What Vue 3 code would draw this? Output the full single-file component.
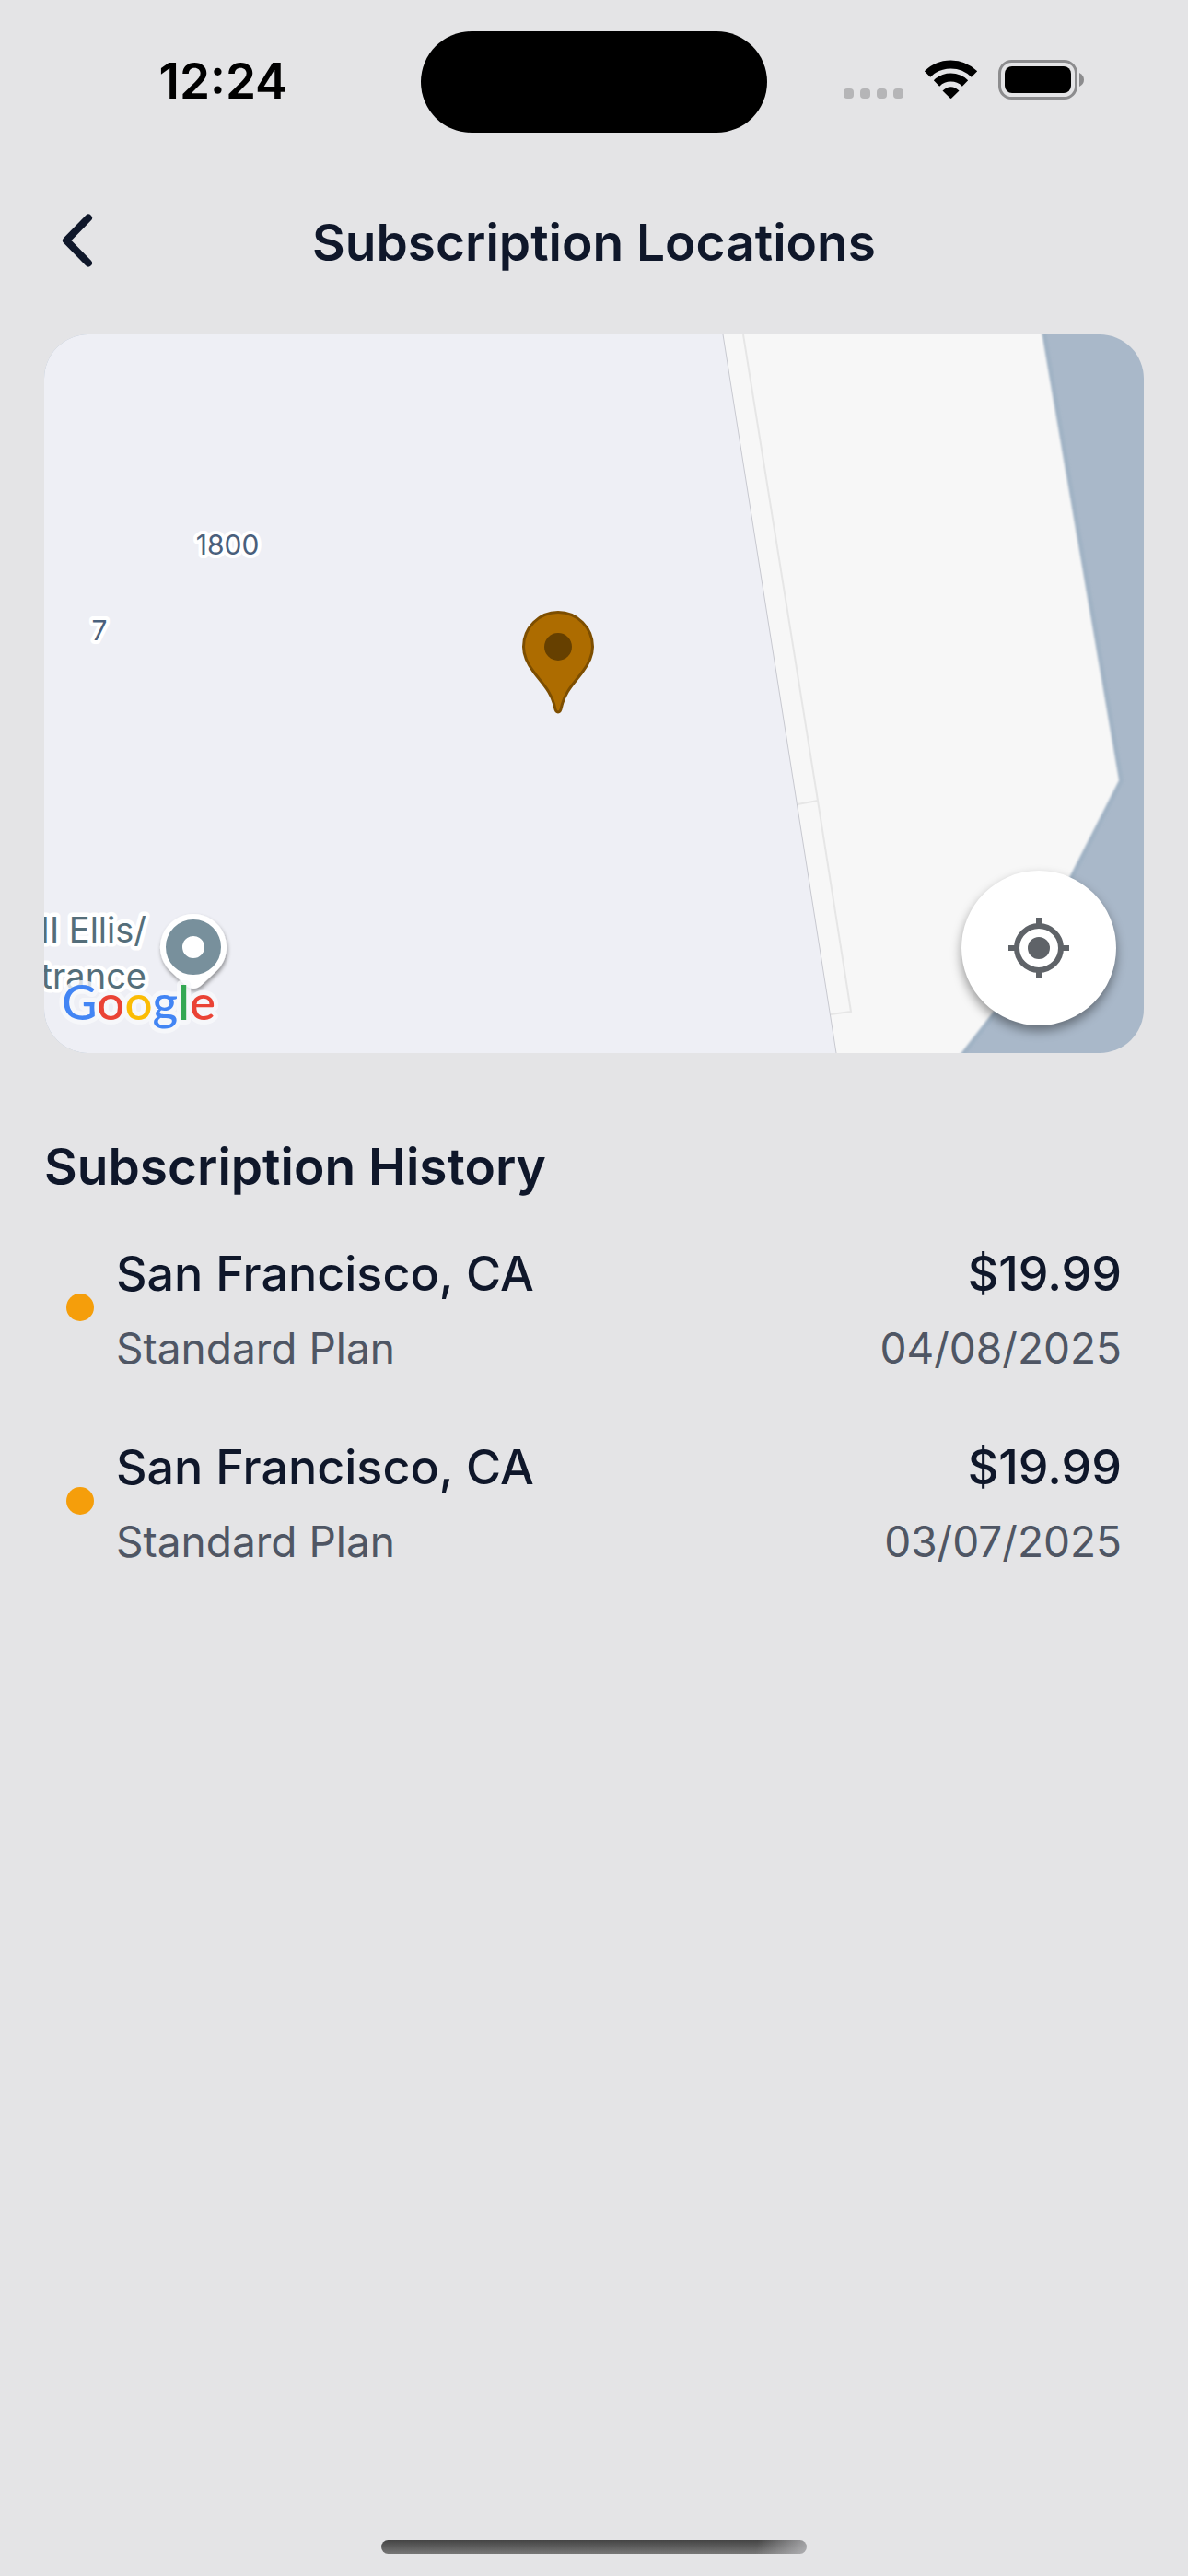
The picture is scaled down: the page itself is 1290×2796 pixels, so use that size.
<script setup>
const history = [
  { id: 1, city: 'San Francisco, CA', plan: 'Standard Plan', price: '$19.99', date: '04/08/2025' },
  { id: 2, city: 'San Francisco, CA', plan: 'Standard Plan', price: '$19.99', date: '03/07/2025' }
]
</script>

<template>
  <div class="screen">
    <div class="status">
      <div class="status-side">
        <time class="clock">12:24</time>
      </div>
      <div class="island"></div>
      <div class="status-side">
        <svg class="status-icons" width="261" height="44" viewBox="0 0 261 44" aria-hidden="true">
          <g fill="#b5b5b7">
            <rect x="0" y="31" width="11" height="11" rx="4" />
            <rect x="18" y="31" width="11" height="11" rx="4" />
            <rect x="36" y="31" width="11" height="11" rx="4" />
            <rect x="54" y="31" width="11" height="11" rx="4" />
          </g>
          <g fill="none" stroke="#000" stroke-width="9">
            <path d="M91 15.5A36 36 0 0 1 142 15.5" />
            <path d="M101 25.5A22 22 0 0 1 132 25.5" />
          </g>
          <path d="M107.500 33.500Q116.500 25 125.500 33.500L117.300 41.600Q116.500 42.400 115.700 41.600Z" />
          <rect x="169.500" y="1.500" width="83" height="40" rx="13" fill="none" stroke="#8c8c8e" stroke-width="3" />
          <rect x="175" y="7" width="72" height="29" rx="8" />
          <path d="M256 14Q261 16.500 261 21.500T256 29Z" fill="#8c8c8e" />
        </svg>
      </div>
    </div>

    <header class="header">
      <button class="back" type="button" aria-label="Back">
        <svg width="34" height="58" viewBox="0 0 34 58" aria-hidden="true">
          <path d="M29 4.500L5 29L29 53.500" fill="none" stroke="#0f172a" stroke-width="8" stroke-linecap="round" stroke-linejoin="round" />
        </svg>
      </button>
      <h1 class="heading">Subscription Locations</h1>
    </header>

    <main class="content">
      <section class="map" aria-label="Map">
        <svg class="tiles" viewBox="0 0 1194 780" preserveAspectRatio="xMidYMid slice">
          <defs>
            <filter id="soft" x="-5%" y="-5%" width="110%" height="110%"><feGaussianBlur stdDeviation="1" /></filter>
            <filter id="drop" x="-30%" y="-30%" width="160%" height="160%"><feDropShadow dx="1" dy="3" stdDeviation="2" flood-opacity="0.4" /></filter>
          </defs>
          <rect width="1194" height="780" fill="#a9b8c9" />
          <path d="M700 -20H1080L1167 484L1054 705L980 800H700Z" fill="#f7f7f7" stroke="#a1b3c5" stroke-width="10" filter="url(#soft)" />
          <path d="M700 -20H1080L1167 484L1054 705L980 800H700Z" fill="#f7f7f7" filter="url(#soft)" />
          <path d="M0 0H737L860 780H0Z" fill="#eeeff5" />
          <path d="M737 0L860 780" stroke="#c8c9d0" stroke-width="1" />
          <path d="M759 0L840 506L876 735L854 738M840 506L818 510" fill="none" stroke="#e6e6e6" stroke-width="2" />

          <g class="number" text-anchor="middle">
            <text x="199" y="239">1800</text>
            <text x="60" y="332">7</text>
          </g>

          <g class="place" text-anchor="end">
            <text x="111" y="660">NI Ellis/</text>
            <text x="111" y="710">trance</text>
          </g>
          <path d="M162 629A36 36 0 0 1 188 690L171 706Q162 714 153 706L136 690A36 36 0 0 1 162 629Z" fill="#fff" filter="url(#drop)" />
          <circle cx="162" cy="665" r="21" fill="none" stroke="#78909c" stroke-width="18" />

          <g transform="translate(519 300)">
            <path d="M39 1.500A37.500 37.500 0 0 0 1.500 39C1.500 50 6 58 13 67C22 79 32 88 35.500 105Q36.500 110 39 110T42.500 105C46 88 56 79 65 67C72 58 76.500 50 76.500 39A37.500 37.500 0 0 0 39 1.500Z" fill="#ad6c00" stroke="#7d4e00" stroke-width="3" />
            <circle cx="39" cy="39" r="15" fill="#664000" />
          </g>

          <text class="brand" x="19" y="744"><tspan fill="#4285f4">G</tspan><tspan fill="#ea4335">o</tspan><tspan fill="#fbbc04">o</tspan><tspan fill="#4285f4">g</tspan><tspan fill="#34a853">l</tspan><tspan fill="#ea4335">e</tspan></text>
        </svg>
        <button class="locate" type="button" aria-label="My location">
          <svg width="66" height="66" viewBox="0 0 66 66" aria-hidden="true">
            <circle cx="33" cy="33" r="12" fill="#5f6368" />
            <circle cx="33" cy="33" r="24" fill="none" stroke="#5f6368" stroke-width="6" />
            <path d="M33 0V8M33 58V66M0 33H8M58 33H66" stroke="#5f6368" stroke-width="6" />
          </svg>
        </button>
      </section>

      <h2 class="heading history-title">Subscription History</h2>
      <ul class="history">
        <li v-for="item in history" :key="item.id" class="entry">
          <span class="dot"></span>
          <div class="info">
            <span class="primary">{{ item.city }}</span>
            <span class="secondary">{{ item.plan }}</span>
          </div>
          <div class="info amount">
            <span class="primary">{{ item.price }}</span>
            <span class="secondary">{{ item.date }}</span>
          </div>
        </li>
      </ul>
    </main>

    <div class="home"></div>
  </div>
</template>

<style>
body {
  background: #e4e4e6;
}
</style>

<style scoped>
.screen {
  min-height: 100vh;
  box-sizing: border-box;
  display: flex;
  flex-direction: column;
  background: #e4e4e6;
  color: #0f172a;
  font-family: Inter, "Liberation Sans", sans-serif;
}
.status {
  display: flex;
  align-items: center;
  padding-top: 34px;
}
.status-side {
  flex: 1;
  display: flex;
  justify-content: center;
}
.status-icons {
  margin: 0 30px 4px 0;
}
.clock {
  color: #000;
  font-size: 53px;
  line-height: 64px;
  font-weight: 600;
  margin: 0 0 2px 28px;
}
.island {
  width: 376px;
  height: 110px;
  border-radius: 55px;
  background: #000;
}
.header {
  display: grid;
  grid-template-columns: 100px 1fr 100px;
  align-items: center;
  padding: 0 48px;
  height: 219px;
  box-sizing: border-box;
}
.header .heading {
  text-align: center;
  padding-top: 18px;
}
.back {
  border: 0;
  background: none;
  padding: 30px 18px 16px 19px;
  display: flex;
  cursor: pointer;
}
.heading {
  margin: 0;
  font-size: 55px;
  line-height: 72px;
  font-weight: 600;
  white-space: nowrap;
}
.content {
  flex: 1;
  padding: 0 48px;
}
.map {
  position: relative;
  height: 780px;
  border-radius: 48px;
  overflow: hidden;
}
.tiles {
  display: block;
  width: 100%;
  height: 100%;
}
.number {
  font-size: 30px;
  fill: #4a607c;
  stroke: #fff;
  stroke-width: 8px;
  stroke-linejoin: round;
  paint-order: stroke;
}
.place {
  font-size: 38px;
  fill: #546e7a;
  stroke: #fff;
  stroke-width: 9px;
  stroke-linejoin: round;
  paint-order: stroke;
}
.brand {
  font-family: Lato, sans-serif;
  font-size: 53px;
  font-weight: 500;
  stroke: rgba(248, 249, 251, 0.8);
  stroke-width: 10px;
  stroke-linejoin: round;
  paint-order: stroke;
}
.locate {
  position: absolute;
  right: 30px;
  bottom: 30px;
  width: 168px;
  height: 168px;
  padding: 0;
  border: 0;
  border-radius: 50%;
  background: #fff;
  box-shadow: 0 6px 12px rgba(0, 0, 0, 0.4);
  display: flex;
  align-items: center;
  justify-content: center;
  cursor: pointer;
}
.history-title {
  margin-top: 87px;
}
.history {
  list-style: none;
  margin: 37px 0 0;
  padding: 0 24px;
  display: flex;
  flex-direction: column;
  gap: 50px;
}
.entry {
  display: flex;
  align-items: center;
  gap: 24px;
}
.dot {
  width: 30px;
  height: 30px;
  border-radius: 50%;
  background: #f59e0b;
}
.info {
  flex: 1;
  display: flex;
  flex-direction: column;
}
.amount {
  text-align: right;
}
.primary {
  font-size: 52px;
  line-height: 88px;
  font-weight: 500;
}
.secondary {
  font-size: 46px;
  line-height: 72px;
  color: #4f5664;
}
.home {
  width: 462px;
  height: 15px;
  margin: 0 auto 24px;
  border-radius: 8px;
  background: linear-gradient(100deg, transparent 88%, rgba(200, 200, 204, 0.7)), linear-gradient(#444, #777);
}
</style>
